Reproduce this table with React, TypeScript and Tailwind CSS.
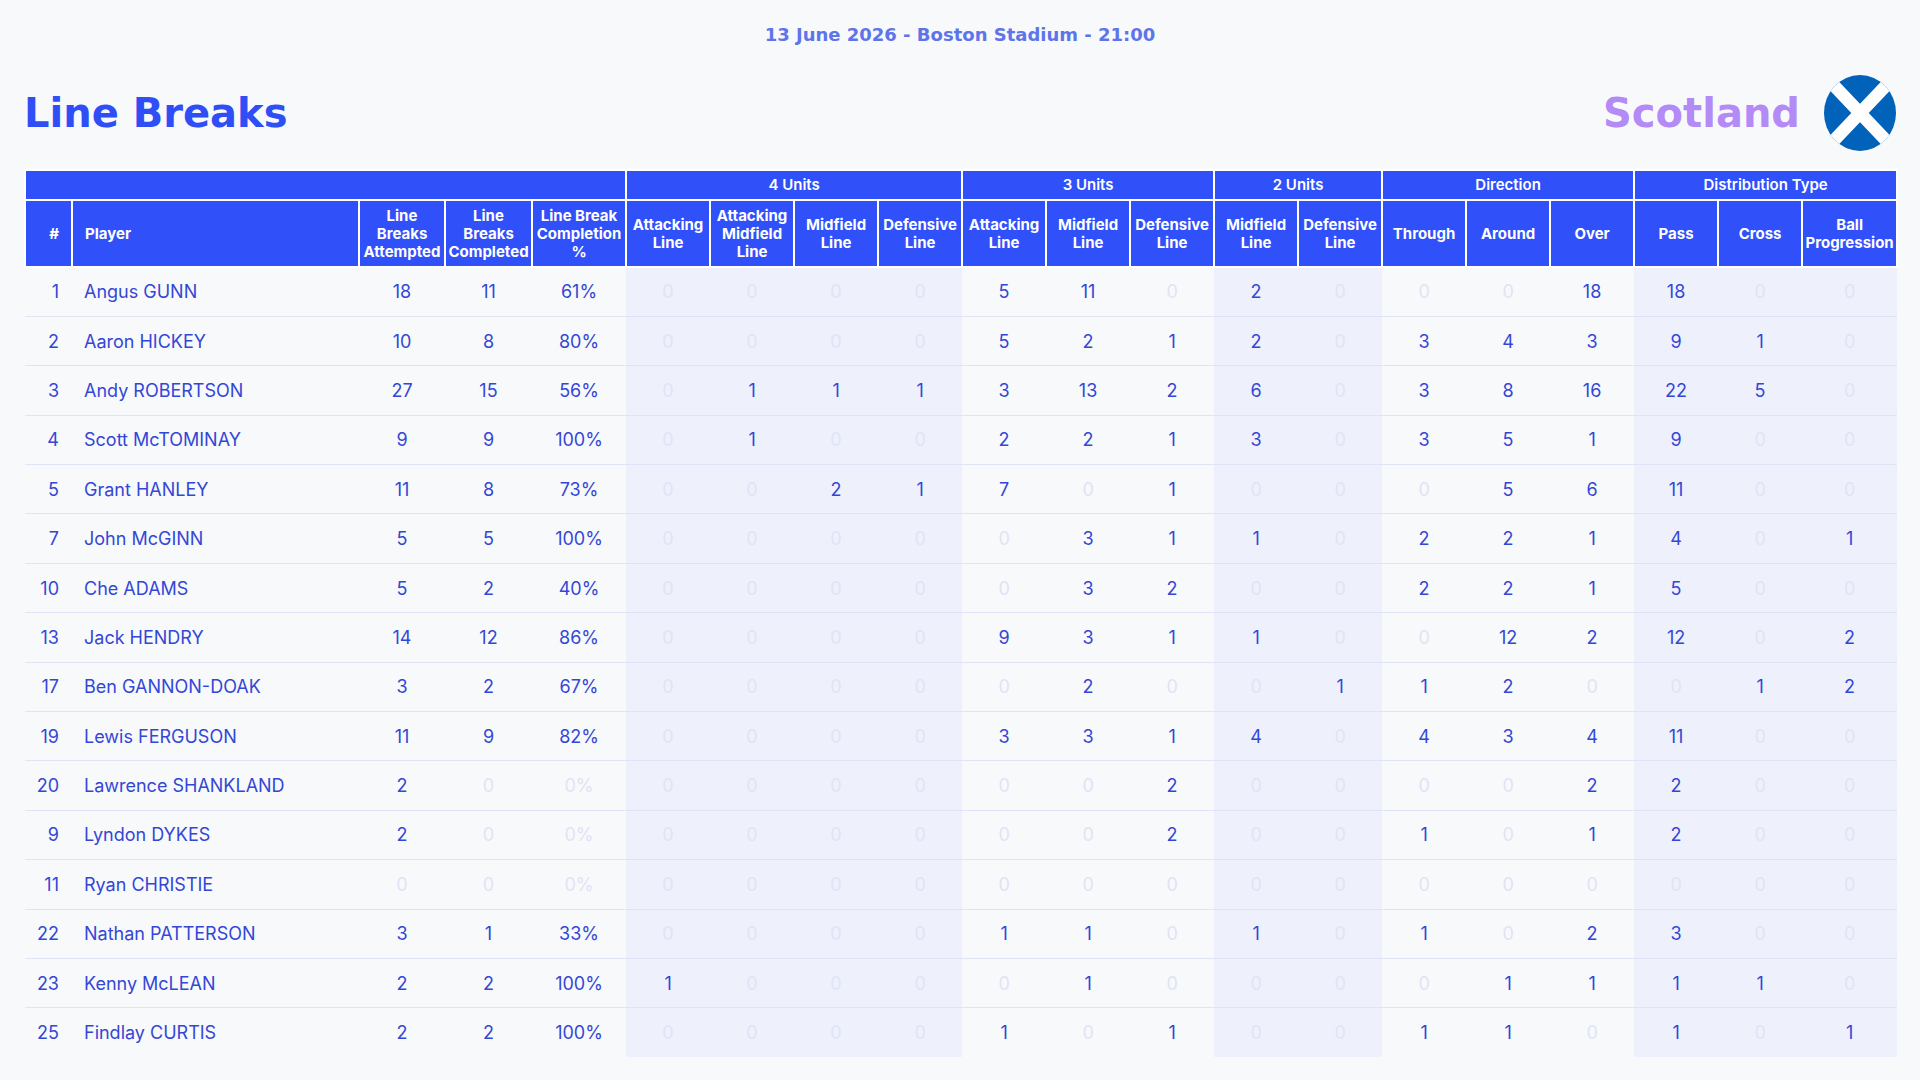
const players: [number, string, ...(number | string)[]][] = [
  [1, 'Angus GUNN', 18, 11, '61%', 0, 0, 0, 0, 5, 11, 0, 2, 0, 0, 0, 18, 18, 0, 0],
  [2, 'Aaron HICKEY', 10, 8, '80%', 0, 0, 0, 0, 5, 2, 1, 2, 0, 3, 4, 3, 9, 1, 0],
  [3, 'Andy ROBERTSON', 27, 15, '56%', 0, 1, 1, 1, 3, 13, 2, 6, 0, 3, 8, 16, 22, 5, 0],
  [4, 'Scott McTOMINAY', 9, 9, '100%', 0, 1, 0, 0, 2, 2, 1, 3, 0, 3, 5, 1, 9, 0, 0],
  [5, 'Grant HANLEY', 11, 8, '73%', 0, 0, 2, 1, 7, 0, 1, 0, 0, 0, 5, 6, 11, 0, 0],
  [7, 'John McGINN', 5, 5, '100%', 0, 0, 0, 0, 0, 3, 1, 1, 0, 2, 2, 1, 4, 0, 1],
  [10, 'Che ADAMS', 5, 2, '40%', 0, 0, 0, 0, 0, 3, 2, 0, 0, 2, 2, 1, 5, 0, 0],
  [13, 'Jack HENDRY', 14, 12, '86%', 0, 0, 0, 0, 9, 3, 1, 1, 0, 0, 12, 2, 12, 0, 2],
  [17, 'Ben GANNON-DOAK', 3, 2, '67%', 0, 0, 0, 0, 0, 2, 0, 0, 1, 1, 2, 0, 0, 1, 2],
  [19, 'Lewis FERGUSON', 11, 9, '82%', 0, 0, 0, 0, 3, 3, 1, 4, 0, 4, 3, 4, 11, 0, 0],
  [20, 'Lawrence SHANKLAND', 2, 0, '0%', 0, 0, 0, 0, 0, 0, 2, 0, 0, 0, 0, 2, 2, 0, 0],
  [9, 'Lyndon DYKES', 2, 0, '0%', 0, 0, 0, 0, 0, 0, 2, 0, 0, 1, 0, 1, 2, 0, 0],
  [11, 'Ryan CHRISTIE', 0, 0, '0%', 0, 0, 0, 0, 0, 0, 0, 0, 0, 0, 0, 0, 0, 0, 0],
  [22, 'Nathan PATTERSON', 3, 1, '33%', 0, 0, 0, 0, 1, 1, 0, 1, 0, 1, 0, 2, 3, 0, 0],
  [23, 'Kenny McLEAN', 2, 2, '100%', 1, 0, 0, 0, 0, 1, 0, 0, 0, 0, 1, 1, 1, 1, 0],
  [25, 'Findlay CURTIS', 2, 2, '100%', 0, 0, 0, 0, 1, 0, 1, 0, 0, 1, 1, 0, 1, 0, 1],
];

// stat columns: label + whether the column group is shaded
const statColumns: { label: string[]; shaded: boolean }[] = [
  { label: ['Line', 'Breaks', 'Attempted'], shaded: false },
  { label: ['Line', 'Breaks', 'Completed'], shaded: false },
  { label: ['Line Break', 'Completion', '%'], shaded: false },
  { label: ['Attacking', 'Line'], shaded: true },
  { label: ['Attacking', 'Midfield', 'Line'], shaded: true },
  { label: ['Midfield', 'Line'], shaded: true },
  { label: ['Defensive', 'Line'], shaded: true },
  { label: ['Attacking', 'Line'], shaded: false },
  { label: ['Midfield', 'Line'], shaded: false },
  { label: ['Defensive', 'Line'], shaded: false },
  { label: ['Midfield', 'Line'], shaded: true },
  { label: ['Defensive', 'Line'], shaded: true },
  { label: ['Through'], shaded: false },
  { label: ['Around'], shaded: false },
  { label: ['Over'], shaded: false },
  { label: ['Pass'], shaded: true },
  { label: ['Cross'], shaded: true },
  { label: ['Ball', 'Progression'], shaded: true },
];

const groups = [
  { label: '4 Units', span: 4 },
  { label: '3 Units', span: 3 },
  { label: '2 Units', span: 2 },
  { label: 'Direction', span: 3 },
  { label: 'Distribution Type', span: 3 },
];

function isZero(v: number | string) {
  return v === 0 || v === '0%';
}

function ScotlandFlag() {
  return (
    <svg viewBox="0 0 100 100" preserveAspectRatio="none" className="h-[76px] w-[72px]">
      <defs>
        <clipPath id="flag-clip">
          <circle cx="50" cy="50" r="50" />
        </clipPath>
      </defs>
      <g clipPath="url(#flag-clip)">
        <rect width="100" height="100" fill="#0062b8" />
        <path d="M0 0 L100 100 M100 0 L0 100" stroke="#ffffff" strokeWidth="17" />
      </g>
    </svg>
  );
}

export default function App() {
  return (
    <div className="min-h-screen bg-[#f8f9fb] px-6 font-['Inter',sans-serif]">
      <div className="flex h-[68px] items-center justify-center">
        <span className="font-['DejaVu_Sans',sans-serif] text-[18px] font-bold text-[#5e74ea]">
          13 June 2026 - Boston Stadium - 21:00
        </span>
      </div>

      <div className="flex h-[90px] items-center justify-between">
        <h1 className="font-['DejaVu_Sans',sans-serif] text-[40px] font-bold leading-none text-[#2f4ef5]">
          Line Breaks
        </h1>
        <div className="flex items-center gap-[24px]">
          <span className="font-['DejaVu_Sans',sans-serif] text-[40px] font-bold leading-none text-[#b38af6]">
            Scotland
          </span>
          <ScotlandFlag />
        </div>
      </div>

      <table className="mt-[11px] w-full table-fixed border-collapse">
        <colgroup>
          <col className="w-[47px]" />
          <col className="w-[287px]" />
          <col className="w-[86px]" />
          <col className="w-[87px]" />
          <col className="w-[94px]" />
          {Array.from({ length: 14 }).map((_, i) => (
            <col key={i} className="w-[84px]" />
          ))}
          <col className="w-[95px]" />
        </colgroup>
        <thead className="bg-[#3050f9] text-white">
          <tr className="h-[30px]">
            <th colSpan={5} className="border-2 border-white" />
            {groups.map((g) => (
              <th
                key={g.label}
                colSpan={g.span}
                className="border-2 border-white text-[15px] font-semibold leading-[18px]"
              >
                {g.label}
              </th>
            ))}
          </tr>
          <tr className="h-[67px] text-[15px] font-semibold leading-[18px]">
            <th className="border-2 border-white pr-3 text-right">#</th>
            <th className="border-2 border-white pl-3 text-left">Player</th>
            {statColumns.map((c, i) => (
              <th key={i} className="border-2 border-white px-0.5 text-center">
                {c.label.map((l, j) => (
                  <div key={j}>{l}</div>
                ))}
              </th>
            ))}
          </tr>
        </thead>
        <tbody className="text-[18px] text-[#3347d6]">
          {players.map(([num, name, ...stats], r) => (
            <tr
              key={name}
              className={
                r < players.length - 1
                  ? 'h-[49.4px] border-b border-[#dfe4f6]'
                  : 'h-[49.4px]'
              }
            >
              <td className="pr-[13px] text-right">{num}</td>
              <td className="pl-3 text-left">{name}</td>
              {stats.map((v, i) => (
                <td
                  key={i}
                  className={
                    (statColumns[i].shaded ? 'bg-[#eef1fc] ' : '') +
                    'text-center ' +
                    (isZero(v) ? 'text-[#dfe4f6]' : '')
                  }
                >
                  {v}
                </td>
              ))}
            </tr>
          ))}
        </tbody>
      </table>
    </div>
  );
}
